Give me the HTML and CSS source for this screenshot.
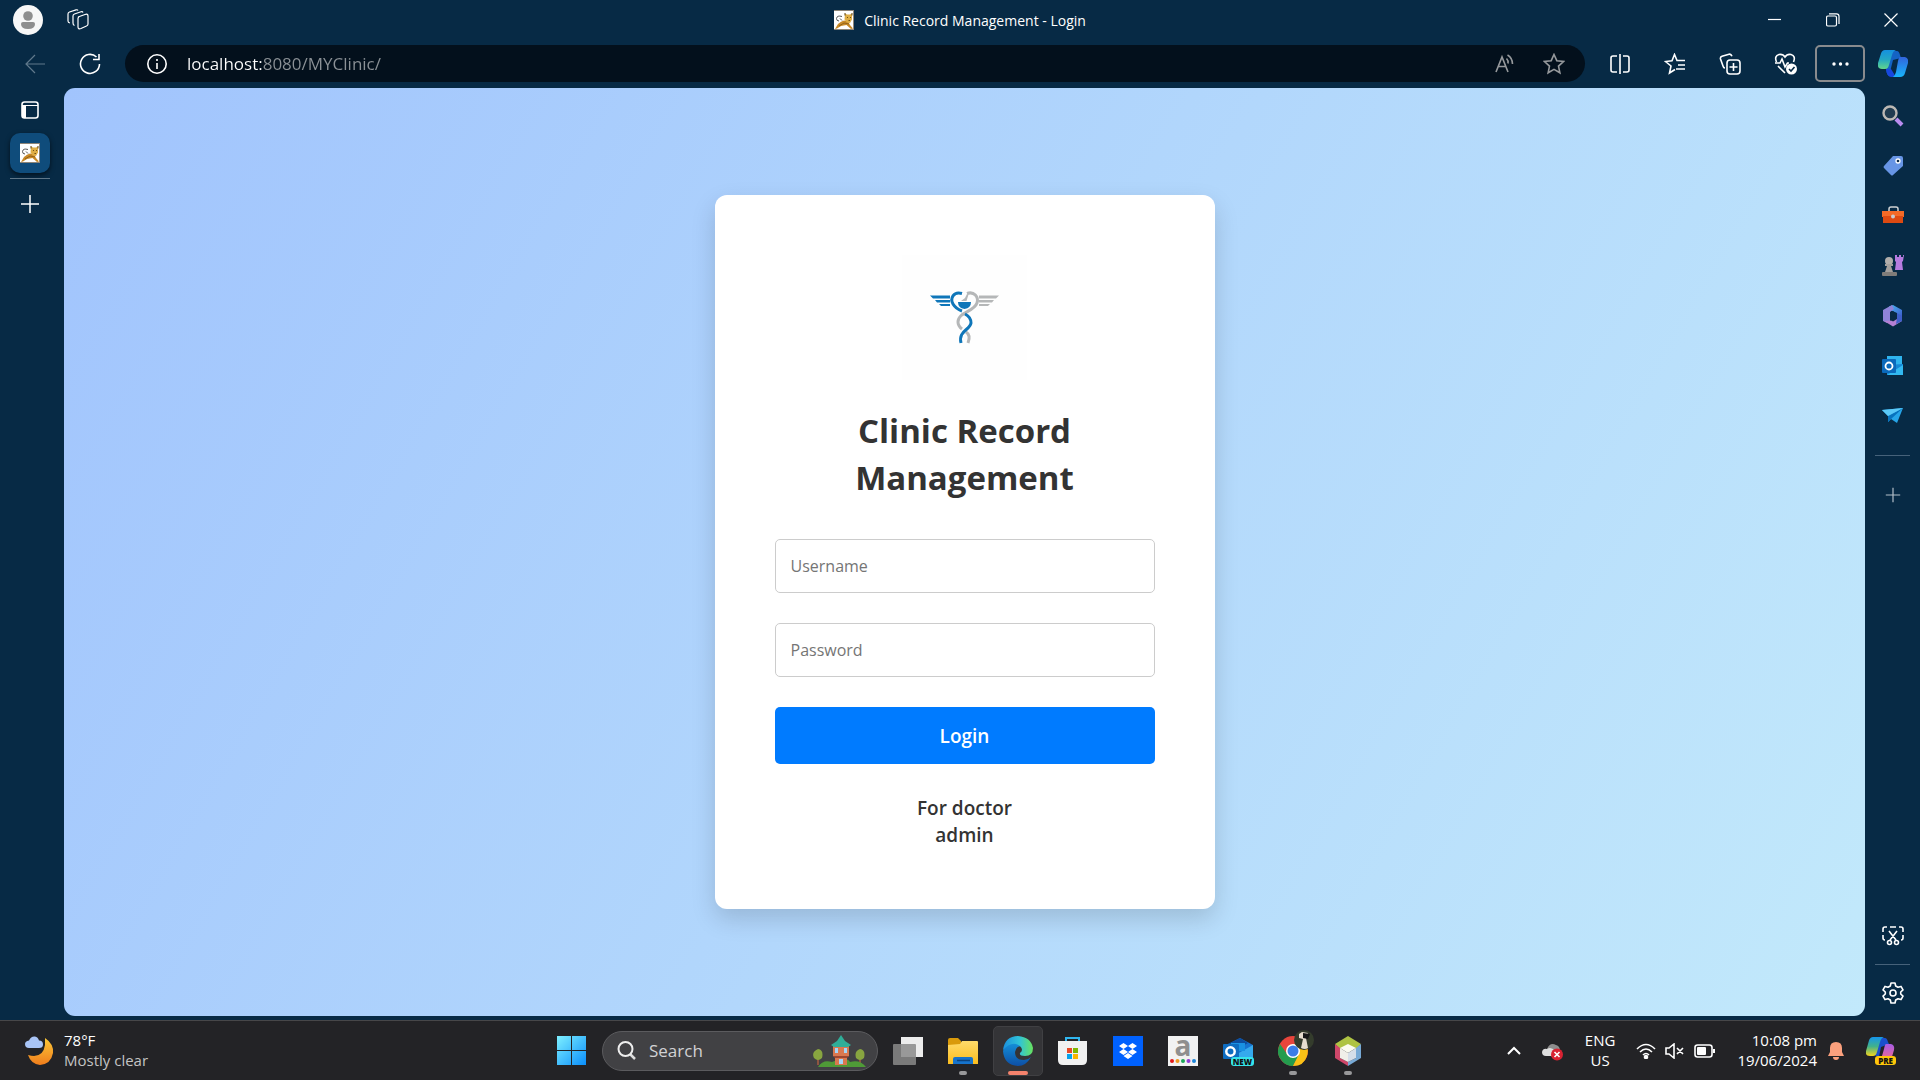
FILE: index.html
```html
<!DOCTYPE html>
<html lang="en">
<head>
  <meta charset="UTF-8">
  <title>Clinic Record Management - Login</title>
  <link rel="stylesheet" href="styles.css">
</head>
<body>
  <!-- shared shapes -->
  <svg class="defs" width="0" height="0">
    <symbol id="tomcat" viewBox="0 0 20 20">
      <rect width="20" height="20" fill="#fff"/>
      <path d="M0 .5H20M19.5 0V20M0 19.5H20" stroke="#8d8578" fill="none"/>
      <path d="M8 6.500Q3 5 2.500 8.500 2.500 11 5 11M6 8.500l2 2" stroke="#555" fill="none"/>
      <path d="M1 19l3-5q3-3 6-3.500l4 .5 2 4 3 3.500-2 .5-4.500-4-5.500 1-4 2.500z" fill="#c98a28"/>
      <path d="M11 3.500l2 1h3l2-1v6l-2 3.500-3-.5-2.500-3z" fill="#dfae45"/>
      <path d="M11 3v2.500M18 3v2.500" stroke="#5b4317" fill="none"/>
      <path d="M13 7.500h1M16 7.500h1M14.500 10.500h1.500" stroke="#6f5118" fill="none"/>
      <path d="M5 16l5-3 5 1" stroke="#7a5214" stroke-width=".7" fill="none"/>
    </symbol>
    <symbol id="plus" viewBox="0 0 20 20">
      <path d="M10 1V19M1 10H19" stroke="currentColor" stroke-width="1.5"/>
    </symbol>
    <linearGradient id="cp1" x1="0" y1="0" x2="0" y2="1"><stop offset="0" stop-color="#1590e0"/><stop offset=".5" stop-color="#23a7c4"/><stop offset="1" stop-color="#62d68a"/></linearGradient>
    <linearGradient id="cp2" x1="0" y1="0" x2="0" y2="1"><stop offset="0" stop-color="#3264db"/><stop offset="1" stop-color="#18b5fb"/></linearGradient>
    <linearGradient id="cp3" x1="0" y1="0" x2="0" y2="1"><stop offset="0" stop-color="#1595ec"/><stop offset=".5" stop-color="#42b28a"/><stop offset="1" stop-color="#f5d51c"/></linearGradient>
    <linearGradient id="cp4" x1="0" y1="0" x2="0" y2="1"><stop offset="0" stop-color="#a75ce6"/><stop offset="1" stop-color="#ff6c7d"/></linearGradient>
    <linearGradient id="win" x1="0" y1="0" x2="1" y2="1"><stop offset="0" stop-color="#7ef0ff"/><stop offset="1" stop-color="#0a8efb"/></linearGradient>
    <linearGradient id="moon" x1="0" y1="0" x2="0" y2="1"><stop offset="0" stop-color="#fbc838"/><stop offset="1" stop-color="#f07d1c"/></linearGradient>
    <linearGradient id="folder" x1="0" y1="0" x2="0" y2="1"><stop offset="0" stop-color="#ffdb6b"/><stop offset="1" stop-color="#fbbd1e"/></linearGradient>
    <linearGradient id="edge1" x1="0" y1="0" x2="1" y2="0"><stop offset="0" stop-color="#1b8fdc"/><stop offset=".55" stop-color="#30c3d9"/><stop offset="1" stop-color="#68e35d"/></linearGradient>
    <linearGradient id="edge2" x1="0" y1="0" x2="0" y2="1"><stop offset="0" stop-color="#1593dc"/><stop offset="1" stop-color="#0d4fa5"/></linearGradient>
    <linearGradient id="m365" x1="0" y1="0" x2="1" y2="1"><stop offset="0" stop-color="#49b7f2"/><stop offset="1" stop-color="#3b55c9"/></linearGradient>
  </svg>

  <header class="browser-top">
    <div class="titlebar">
      <div class="title-left">
        <button class="icon-btn" aria-label="Profile">
          <svg width="30" height="30"><circle cx="15" cy="15" r="15" fill="#f7f7f7"/><circle cx="15" cy="11" r="4.800" fill="#8e8e8e"/><path d="M8 19q0-2 2-2h10q2 0 2 2 0 5-7 5t-7-5z" fill="#8e8e8e"/></svg>
        </button>
        <button class="icon-btn" aria-label="Workspaces">
          <svg class="line" width="22" height="22"><path d="M11 8l7-2.500q3-1 3 1.500v8q0 1.500-1.500 2L14 19.500q-3 1-3-1.500V9.500q0-1 1-1.500z"/><path d="M7.500 16.500Q6 16 6 14V7q0-1.500 1.500-2L14 2.800q1.500-.5 2 .7"/><path d="M3 14q-2-.3-2-2V5q0-1.500 1.500-2L9 .9q1.500-.5 2 .6"/></svg>
        </button>
      </div>
      <div class="title-tab">
        <svg width="20" height="20"><use href="#tomcat"/></svg>
        <span>Clinic Record Management - Login</span>
      </div>
      <div class="window-buttons">
        <button class="icon-btn" aria-label="Minimize"><svg class="line" width="14" height="14"><path d="M0 6.500H13"/></svg></button>
        <button class="icon-btn" aria-label="Restore"><svg class="line" width="14" height="14"><rect x=".5" y="3" width="10" height="10" rx="1.500"/><path d="M3 .8h7.500q2.500 0 2.500 2.500V11"/></svg></button>
        <button class="icon-btn" aria-label="Close"><svg class="line" width="14" height="14"><path d="M.5 .5l13 13M13.500 .5l-13 13"/></svg></button>
      </div>
    </div>

    <div class="toolbar">
      <div class="nav-buttons">
        <button class="icon-btn dim" aria-label="Back"><svg class="line" width="20" height="20"><path d="M20 10H1M10 1L1 10l9 9"/></svg></button>
        <button class="icon-btn" aria-label="Refresh"><svg class="line bold" width="22" height="22"><path d="M20.500 11A9.500 9.500 0 1 1 17.500 4M20 1v5.500h-6"/></svg></button>
      </div>
      <div class="address">
        <svg class="line bold" width="20" height="20"><circle cx="10" cy="10" r="9.200"/><path d="M10 9v6M10 5v2"/></svg>
        <input class="address-input" type="text" aria-label="Address" value="localhost:8080/MYClinic/">
        <button class="icon-btn grey" aria-label="Read aloud"><svg class="line bold" width="20" height="20"><path d="M1 18L7 3l6 15M3 12.500h8M11.500 4.500q2 2 1.500 5M12.500 1q5 3 5 9"/></svg></button>
        <button class="icon-btn grey" aria-label="Add to favorites"><svg class="line bold" width="22" height="22"><path d="M11 1.500l2.800 6.200 6.700.8-5 4.600 1.400 6.700L11 16.400l-5.900 3.400 1.400-6.700-5-4.600 6.700-.8z"/></svg></button>
      </div>
      <div class="tools">
        <button class="icon-btn" aria-label="Split screen"><svg class="line bold" width="22" height="22"><path d="M8 3H4Q2 3 2 5V17q0 2 2 2h4M14 3h4q2 0 2 2V17q0 2-2 2h-4M11 1V21"/></svg></button>
        <button class="icon-btn" aria-label="Favorites"><svg class="line bold" width="22" height="22"><path d="M11 16.500L5.500 20 7 13 1.500 8.500l6.500-.8L10.500 1.500 13 7.500h8M14 12h7M12 16h9"/></svg></button>
        <button class="icon-btn" aria-label="Collections"><svg class="line bold" width="22" height="22"><rect x="8" y="7" width="13" height="14" rx="3"/><path d="M14.500 10v8M10.500 14h8M6 15q-1.500 0-2-2L1.500 6q-.5-2 1.500-2.700L10 1.200q2-.5 3 2"/></svg></button>
        <button class="icon-btn" aria-label="Browser essentials"><svg class="line bold" width="24" height="22"><path d="M2.500 9Q0 3 5 1.500 9 .8 11 4q2-3.200 6-2.500 5 1.500 2.500 7.500M4 13l7 7M1 10h5l2-4 3 8 2.500-4H15"/><circle cx="17.500" cy="16" r="5.500" fill="#fff" stroke="none"/><path d="M15 16l2 2 3.500-4" stroke="#072a45"/></svg></button>
        <button class="icon-btn more" aria-label="Settings and more"><svg width="18" height="6"><circle cx="3" cy="3" r="1.700" fill="#fff"/><circle cx="9.500" cy="3" r="1.700" fill="#fff"/><circle cx="16" cy="3" r="1.700" fill="#fff"/></svg></button>
        <button class="icon-btn copilot" aria-label="Copilot"><svg width="30" height="28"><path d="M8 17l4-13q1-3 4-3h3q2 0 3 4l1 3-8 2-4 16q-3-2-3-9z" fill="#1463c4"/><path d="M7 0h11q-3 1-4 5l-3 10q-1 4-4 4H4q-5 0-4-6L3 3.500Q4 0 7 0z" fill="url(#cp1)"/><path d="M8 19h5l5 8h-5q-4 0-5-8z" fill="#1747df"/><path d="M22 7h5q4 1 3 6l-3 10q-1 4-5 4h-7q2-1 3-5l2-11q1-4 2-4z" fill="url(#cp2)"/></svg></button>
      </div>
    </div>
  </header>

  <main class="browser-body">
    <nav class="tab-strip">
      <button class="icon-btn" aria-label="Tab actions"><svg width="18" height="18"><rect x="1" y="1" width="16" height="16" rx="2.500" fill="none" stroke="#fff" stroke-width="1.600"/><path d="M1 4.500H17" stroke="#fff"/><path d="M1 4.500h4V17H2q-1 0-1-1z" fill="#fff"/></svg></button>
      <button class="icon-btn active-tab" aria-label="Clinic Record Management - Login"><svg width="20" height="20"><use href="#tomcat"/></svg></button>
      <hr class="tab-line">
      <button class="icon-btn new-tab" aria-label="New tab"><svg width="20" height="20"><use href="#plus"/></svg></button>
    </nav>

    <section class="page">
      <form class="login-container">
        <svg class="logo" viewBox="0 0 125 125" role="img" aria-label="Clinic logo">
          <rect width="125" height="125" fill="#fefefe"/>
          <g fill="#0f76b9">
            <path d="M28 40.500h20v3H31zM33 45h15v2.500H35zM37 49h11v2H39z"/>
            <path d="M56 47h13q0 6-6.500 7-6.500-1-6.500-7z"/>
          </g>
          <g fill="#b5b7b8">
            <path d="M97 40.500H77v3h17zM92 45H77v2.500h13zM88 49H77v2h9z"/>
            <path d="M59 46l4-3 2-4 1.500.5-2 6.500z"/>
          </g>
          <g fill="none" stroke-width="3">
            <path d="M65 38.500C72 36 77 42 75 48 C72 57 56 57 56 67Q56 71 60 74M64 77Q69 80 66 88" stroke="#b5b7b8"/>
            <path d="M60 38.500C51 36 48 44 51 49Q54 54 60 56M63 59Q69 62 69 68C68 75 56 76 59 88" stroke="#0f76b9"/>
          </g>
        </svg>
        <h1>Clinic Record Management</h1>
        <input class="field" type="text" placeholder="Username" aria-label="Username">
        <input class="field" type="password" placeholder="Password" aria-label="Password">
        <button class="login-btn" type="button">Login</button>
        <p class="hint">For doctor<br>admin</p>
      </form>
    </section>

    <aside class="sidebar">
      <button class="icon-btn" aria-label="Search"><svg width="22" height="22"><path d="M14 14l6 6" stroke="#b98cf0" stroke-width="4"/><circle cx="8" cy="8" r="6.500" fill="#203b50" stroke="#bcb8b4" stroke-width="2.400"/></svg></button>
      <button class="icon-btn" aria-label="Shopping"><svg width="22" height="22"><path d="M11 1h8q2 0 2 2v8L11 20q-1 1-2 0l-7-7q-1-1 0-2z" fill="#6795e5"/><circle cx="16" cy="6" r="2" fill="#0b2a48" stroke="#fff" stroke-width="1.300"/></svg></button>
      <button class="icon-btn" aria-label="Tools"><svg width="22" height="22"><path d="M7 6V4q0-2 2-2h5q2 0 2 2v2" fill="none" stroke="#cfd1d2" stroke-width="1.500"/><path d="M0 6h22v6H0z" fill="#f36a27"/><path d="M1 11h20v7H1z" fill="#dd4a12"/><circle cx="11" cy="11.500" r="2" fill="#c8ccd0"/></svg></button>
      <button class="icon-btn" aria-label="Games"><svg width="22" height="24"><path d="M13 1h2v2h2V1h2v2h2V1h1l-1 6-1 1 1 8h-8l1-8-1-1z" fill="#b67be0"/><circle cx="7" cy="7" r="4" fill="#b1aeab"/><path d="M3 10h8v2H9l2 6H3l2-6H3z" fill="#a29f9c"/><rect y="18" width="15" height="4" rx="1" fill="#7f7c79"/></svg></button>
      <button class="icon-btn" aria-label="Microsoft 365"><svg width="22" height="24"><path d="M7 2.500L11 1l9 5v9l-5-3V9L8 6z" fill="url(#m365)"/><path d="M10 1L1 6v11l4 2 3-2V8l4-3z" fill="#8f83d8"/><path d="M2 17l9 5.500 9-5.500v-3l-5-1-5 3.500z" fill="#b580d4"/><path d="M15 9l5 3v5l-6 3 1-6z" fill="#405fc9"/><path d="M8 8.500l3-1.500 4 3v5l-4 2.500-3-2z" fill="#072a45"/></svg></button>
      <button class="icon-btn" aria-label="Outlook"><svg width="22" height="22"><path d="M5 1h15v12H5z" fill="#2fb4ee"/><path d="M5 10l16-1v11H5z" fill="#1688d5"/><path d="M5 20l16-10v10z" fill="#32b9f1"/><rect y="4" width="14" height="14" rx="1" fill="#0b69bb"/><circle cx="7" cy="11" r="3.500" fill="none" stroke="#fff" stroke-width="1.800"/></svg></button>
      <button class="icon-btn" aria-label="Drop"><svg width="22" height="20"><path d="M0 4L21 2 15 17 9 13 6 16V10z" fill="#26a5e8"/><path d="M6 10L21 2 9 13l-3 3z" fill="#0872bd"/><path d="M0 4l21-2L6 10z" fill="#5bc9f7"/></svg></button>
      <hr class="side-line">
      <button class="icon-btn add" aria-label="Customize"><svg width="16" height="16"><use href="#plus"/></svg></button>
      <div class="side-bottom">
        <button class="icon-btn" aria-label="Screenshot"><svg class="line bold" width="22" height="20"><path d="M1 6V3q0-2 2-2h2M8 1h6M17 1h2q2 0 2 2v3M1 9v3q0 2 2 2M21 9v3q0 2-2 2M7 5l7 9M15 5l-7 9"/><circle cx="7.500" cy="16.500" r="2"/><circle cx="14.500" cy="16.500" r="2"/></svg></button>
        <hr class="side-line">
        <button class="icon-btn" aria-label="Settings"><svg class="line bold" width="22" height="22"><path d="M9 1h4l.7 3 2.300 1.300 3-.9 2 3.500L18.700 10v2l2.300 2.100-2 3.500-3-.9-2.300 1.300L13 21H9l-.7-3L6 16.700l-3 .9-2-3.500L3.300 12v-2L1 7.900l2-3.500 3 .9L8.300 4z" stroke-linejoin="round"/><circle cx="11" cy="11" r="3"/></svg></button>
      </div>
    </aside>
  </main>

  <footer class="taskbar">
    <button class="weather">
      <svg width="30" height="30"><path d="M20 2q9 6 8 15-2 11-13 12Q6 28 3 19q15 4 17-10z" fill="url(#moon)"/><path d="M4 12q-4 0-4-4 0-3 4-3.500Q6 0 10 .5q3 .5 4 4 4 0 4 4 0 3.500-4 3.500z" fill="#a8c4f6"/></svg>
      <span class="two-lines"><span>78°F</span><span class="muted">Mostly clear</span></span>
    </button>

    <div class="apps">
      <button class="app" aria-label="Start"><svg width="30" height="30"><path d="M0 0h14v14H0zM15 0h14v14H15zM0 15h14v14H0zM15 15h14v14H15z" fill="url(#win)"/></svg></button>
      <label class="search">
        <svg width="20" height="20"><path d="M13 13l5 5" stroke="#ddd" stroke-width="2.500"/><circle cx="8.500" cy="8" r="7" fill="none" stroke="#eee" stroke-width="2"/></svg>
        <input class="search-input" type="text" placeholder="Search" aria-label="Search">
        <svg width="54" height="34"><path d="M5 24v7M47 24v7" stroke="#a85d40" stroke-width="1.500"/><path d="M5 15q6 1 4 9-4 4-8 0-3-6 4-9zM47 15q6 1 4 9-4 4-8 0-2-7 4-9z" fill="#88a540"/><path d="M5 33q5-8 14-5 15-6 18 0 10-3 16 5z" fill="#4f9a37"/><path d="M20 11h16v11l-2 1v8H22v-8l-2-1z" fill="#d9784f"/><path d="M20 22h16l-2 2H22z" fill="#9d4630"/><path d="M28 1l4 6 6 4-3 2H21l-3-2 6-4z" fill="#2fae98"/><path d="M22 14h3v5h-3zM31 14h3v5h-3zM26 25h4v5h-4z" fill="#a5d5f7"/></svg>
      </label>
      <button class="app" aria-label="Task view"><svg width="30" height="30"><rect x="8" y="1" width="22" height="20" fill="#ededed"/><rect y="8" width="23" height="21" rx="1" fill="#8a8a8a" opacity=".85"/></svg></button>
      <button class="app running" aria-label="File Explorer"><svg width="30" height="30"><path d="M0 4q0-2 2-2h8l3 3v7H0z" fill="#d99a0b"/><path d="M0 9l12-1 2-3h15q1 0 1 1v22H0z" fill="url(#folder)"/><path d="M5 28v-5q0-2 2-2h16q2 0 2 2v5z" fill="#1673cb"/><path d="M9 24.500h13" stroke="#0b427c" stroke-width="1.500"/></svg></button>
      <button class="app running current" aria-label="Microsoft Edge"><svg width="30" height="30"><path d="M0 15Q3 4 15 6q7 2 7 6-8-5-10 4 0 8 9 8 4 0 7-3-5 9-13 9Q1 29 0 15z" fill="url(#edge2)"/><path d="M0 14Q2 0 15 0q13 1 15 12 0 8-8 8-6 0-5-3 4-3 0-7Q9 4 0 14z" fill="url(#edge1)"/></svg></button>
      <button class="app" aria-label="Microsoft Store"><svg width="30" height="30"><path d="M8 7V2h13v5" fill="none" stroke="#30b6ef" stroke-width="2"/><path d="M0 5h29v19q0 5-5 5H5q-5 0-5-5z" fill="#f1f1f1"/><path d="M9 12h5v5H9z" fill="#e84a27"/><path d="M15 12h5v5h-5z" fill="#7db802"/><path d="M9 18h5v5H9z" fill="#05a3ed"/><path d="M15 18h5v5h-5z" fill="#fbb401"/></svg></button>
      <button class="app" aria-label="Dropbox"><svg width="30" height="30"><rect width="30" height="30" fill="#0061fe"/><path d="M10.500 7l4.500 3-4.500 3L6 10zM19.500 7l4.500 3-4.500 3-4.500-3zM10.500 13l4.500 3-4.500 3L6 16zM19.500 13l4.500 3-4.500 3-4.500-3zM15 17l4.500 3-4.500 3-4.500-3z" fill="#fff"/></svg></button>
      <button class="app" aria-label="Alexa"><span class="amz"><b>a</b><svg width="28" height="6"><circle cx="3" cy="3" r="2" fill="#e21b1b"/><circle cx="8.500" cy="3" r="2" fill="#f09a20"/><circle cx="14" cy="3" r="2" fill="#1da75a"/><circle cx="19.500" cy="3" r="2" fill="#8f3bd8"/><circle cx="25" cy="3" r="2" fill="#1d86d8"/></svg></span></button>
      <button class="app" aria-label="Outlook"><svg width="30" height="30"><path d="M5 8L17 2l13 7v14H5z" fill="#1673cf"/><path d="M5 8l12-6 8 5-14 8z" fill="#0c4d9f"/><path d="M14 18l16-9v14H14z" fill="#35a9ed"/><path d="M8 7h14v8H8z" fill="#1991e2"/><rect y="8" width="16" height="15" rx="1" fill="#0e6cc0"/><circle cx="7.500" cy="15.500" r="4.200" fill="none" stroke="#fff" stroke-width="2.500"/></svg><span class="tag tag-new">NEW</span></button>
      <button class="app running" aria-label="Chrome"><svg width="30" height="30"><circle cx="15" cy="15" r="15" fill="#e8453c"/><path d="M2 8Q-3 18 4 25q4 5 11 5l6-11-6 2-6-3z" fill="#249c4e"/><path d="M15 30q11 0 14-10 2-6-1-12H15l6 10z" fill="#fbc116"/><circle cx="15" cy="15" r="7" fill="#fff"/><circle cx="15" cy="15" r="5.500" fill="#3b7ce8"/></svg>
        <svg class="chrome-user" width="20" height="20"><circle cx="10" cy="10" r="10" fill="#343c2c"/><path d="M5 4l3-2 6 1-2 5 2 10q-3 2-7 0l2-9-4-1z" fill="#e6ddcd"/><path d="M9 3l7 1-2 5-5-1z" fill="#171918"/></svg></button>
      <button class="app running" aria-label="NetBeans"><svg width="28" height="30"><path d="M14 0l13 8-5 5-8-4-8 4-5-5z" fill="#aec343"/><path d="M1 8l5 4v10l8 4v4L1 22z" fill="#cf476a"/><path d="M27 8l-5 4v10l-8 4v4l13-8z" fill="#77a9d5"/><path d="M14 8l8 4-8 5-8-5z" fill="#fbfbf1"/><path d="M6 12l8 5v9l-8-4z" fill="#f0efe9"/><path d="M22 12l-8 5v9l8-4z" fill="#d5dee9"/></svg></button>
    </div>

    <div class="tray">
      <button class="tray-btn" aria-label="Hidden icons"><svg class="line" width="14" height="10"><path d="M1 8l6-6 6 6" stroke-width="2"/></svg></button>
      <button class="tray-btn" aria-label="OneDrive"><svg width="22" height="20"><path d="M5 8Q8 1 14 4q4 1 4 6l-8 6z" fill="#8d8d8d"/><path d="M4 15q-4 0-4-4 1-4 5-3 4-3 8 2v5z" fill="#dedede"/><circle cx="15" cy="13.500" r="6" fill="#d92232"/><path d="M12.500 11l5 5M17.500 11l-5 5" stroke="#fff" stroke-width="1.600"/></svg></button>
      <button class="tray-btn lang"><span>ENG</span><span>US</span></button>
      <button class="tray-btn quick" aria-label="Network, volume and battery">
        <svg class="line bold" width="20" height="16"><path d="M1 6q9-9 18 0M4 9q6-6 12 0M7 12q3-3 6 0"/><circle cx="10" cy="14" r="1.500" fill="#fff"/></svg>
        <svg class="line bold" width="20" height="16"><path d="M1 5h3l5-4v14l-5-4H1zM12 5l6 6M18 5l-6 6"/></svg>
        <svg class="line bold" width="22" height="16"><rect x="1" y="2" width="17" height="12" rx="2.500"/><rect x="3" y="4" width="9" height="8" rx="1" fill="#fff" stroke="none"/><path d="M20 6v4" stroke-width="2"/></svg>
      </button>
      <button class="tray-btn clock"><span>10:08 pm</span><span>19/06/2024</span></button>
      <button class="tray-btn" aria-label="Notifications"><svg width="18" height="20"><path d="M1 15l2-4V7q0-6 6-6t6 6v4l2 4zM6 16h6q0 3-3 3t-3-3z" fill="#fba07d"/></svg></button>
      <button class="tray-btn copilot-pre" aria-label="Copilot preview"><svg width="30" height="28"><path d="M8 18l4-14q1-3 4-3h3q2 0 3 4l1 2-8 3-2 10z" fill="#1a50cc"/><path d="M7 0h11q-3 1-4 5l-3 10q-1 4-4 4H4q-5 0-4-5L3 3.500Q4 0 7 0z" fill="url(#cp3)"/><path d="M20 7h5q4 1 3 6l-3 10q-1 3-5 3h-6l4-14q1-5 2-5z" fill="url(#cp4)"/></svg><span class="tag tag-pre">PRE</span></button>
    </div>
  </footer>
</body>
</html>
```

FILE: styles.css
```css
*{
  box-sizing: border-box;
  padding: 0;
  margin: 0;
}
body{
  display: flex;
  flex-direction: column;
  height: 100vh;
  overflow: hidden;
  background: #072a45;
  color: #fff;
  font-family: "Open Sans", "Noto Sans", sans-serif;
  font-size: 14px;
}
button, input{
  border: none;
  background: none;
  color: inherit;
  font: inherit;
  outline: none;
}
svg{
  display: block;
  flex: none;
}
.defs{
  position: absolute;
}
.line{
  fill: none;
  stroke: currentColor;
  stroke-width: 1.2;
}
.bold{
  stroke-width: 1.6;
}
.icon-btn{
  display: flex;
  align-items: center;
  justify-content: center;
  flex: none;
}

/* title bar */
.titlebar{
  display: grid;
  grid-template-columns: 1fr auto 1fr;
  align-items: center;
  height: 40px;
}
.title-left{
  display: flex;
  gap: 24px;
  padding-left: 13px;
}
.title-tab{
  display: flex;
  align-items: center;
  gap: 10px;
}
.window-buttons{
  display: flex;
  justify-content: flex-end;
  gap: 44px;
  padding-right: 22px;
}

/* toolbar */
.toolbar{
  display: flex;
  align-items: center;
  height: 48px;
  padding: 0 12px 1px 0;
}
.nav-buttons{
  display: flex;
  align-items: center;
  gap: 34px;
  width: 125px;
  padding-left: 25px;
}
.dim{
  color: #60798c;
}
.grey{
  color: #96999c;
}
.address{
  display: flex;
  flex: 1;
  align-items: center;
  gap: 20px;
  height: 37px;
  padding: 0 20px 0 22px;
  border-radius: 19px;
  background: #03101c;
}
.address-input{
  flex: 1;
  min-width: 0;
  font-size: 17px;
  background: linear-gradient(90deg, #fff 75px, #8b9196 75px);
  -webkit-background-clip: text;
  background-clip: text;
  color: transparent;
}
.address .grey + .grey{
  margin-left: 8px;
}
.tools{
  display: flex;
  align-items: center;
  gap: 33px;
  padding-left: 24px;
}
.more{
  width: 50px;
  height: 37px;
  margin: 0 -20px 0 -16px;
  border: 2px solid #898b8e;
  border-radius: 5px;
}

/* middle */
.browser-body{
  display: flex;
  flex: 1;
  min-height: 0;
  padding-bottom: 4px;
}
.tab-strip{
  display: flex;
  flex-direction: column;
  align-items: center;
  width: 64px;
  padding: 13px 10px 0 6px;
}
.active-tab{
  width: 40px;
  height: 40px;
  margin-top: 14px;
  border-radius: 10px;
  background: #0f4c7b;
  box-shadow: 0 2px 5px rgba(0, 0, 0, .6);
}
.tab-line{
  width: 40px;
  margin: 5px 0 15px;
  border: none;
  border-top: 1px solid #5f7688;
}
.page{
  display: flex;
  flex: 1;
  align-items: center;
  justify-content: center;
  border-radius: 11px;
  background: linear-gradient(120deg, #a1c4fd 0%, #c2e9fb 100%);
}
.login-container{
  display: flex;
  flex-direction: column;
  align-items: center;
  width: 500px;
  padding: 60px;
  border-radius: 12px;
  background: #fff;
  box-shadow: 0 10px 25px rgba(0, 0, 0, .15);
  color: #333;
}
.logo{
  width: 125px;
}
h1{
  margin: 27px 0 38px;
  font-size: 33px;
  line-height: 47px;
  text-align: center;
}
.field{
  width: 100%;
  height: 54px;
  margin-bottom: 30px;
  padding: 0 15px;
  border: 1px solid #ccc;
  border-radius: 5px;
  font-size: 16px;
}
.field::placeholder{
  color: #757575;
}
.login-btn{
  width: 100%;
  height: 57px;
  border-radius: 5px;
  background: #007bff;
  color: #fff;
  font-size: 19px;
  font-weight: 600;
}
.hint{
  margin-top: 31px;
  font-size: 19px;
  font-weight: 600;
  line-height: 27px;
  text-align: center;
}

/* right sidebar */
.sidebar{
  display: flex;
  flex-direction: column;
  align-items: center;
  gap: 28px;
  width: 55px;
  padding-top: 17px;
}
.sidebar .icon-btn{
  height: 22px;
}
.side-line{
  width: 35px;
  border: none;
  border-top: 1px solid #46627a;
}
.sidebar .add{
  color: #b4bfc9;
}
.side-bottom{
  display: flex;
  flex-direction: column;
  align-items: center;
  gap: 17px;
  margin: auto 0 12px;
}

/* taskbar */
.taskbar{
  display: grid;
  grid-template-columns: 1fr auto 1fr;
  align-items: center;
  height: 60px;
  border-top: 1px solid #474749;
  background: #232326;
  font-size: 15px;
}
.weather{
  display: flex;
  align-items: center;
  gap: 9px;
  padding-left: 25px;
}
.two-lines{
  display: flex;
  flex-direction: column;
  padding-bottom: 2px;
  line-height: 20px;
  text-align: left;
}
.muted{
  color: #c4c4c4;
}
.apps{
  display: flex;
  align-items: center;
  gap: 5px;
}
.app{
  position: relative;
  display: flex;
  align-items: center;
  justify-content: center;
  width: 50px;
  height: 50px;
  border-radius: 5px;
}
.running::after{
  content: "";
  position: absolute;
  bottom: 1px;
  left: 50%;
  width: 8px;
  height: 4px;
  border-radius: 2px;
  background: #98989a;
  transform: translateX(-50%);
}
.current{
  background: #343437;
  border: 1px solid #404043;
}
.current::after{
  bottom: 0;
  width: 20px;
  background: #f4826c;
}
.search{
  display: flex;
  align-items: center;
  gap: 12px;
  width: 276px;
  height: 40px;
  padding: 0 10px 0 14px;
  border: 1px solid #5b5b5e;
  border-radius: 20px;
  background: #414144;
}
.search-input{
  flex: 1;
  min-width: 0;
  font-size: 17px;
}
.search-input::placeholder{
  color: #d2d2d4;
}
.amz{
  display: flex;
  flex-direction: column;
  align-items: center;
  justify-content: space-between;
  width: 30px;
  height: 30px;
  padding-bottom: 2px;
  background: #f2f2f2;
  color: #8f8f8f;
  font-size: 28px;
  line-height: 18px;
}
.tag{
  position: absolute;
  border-radius: 3px;
  color: #111;
  font-size: 8px;
  font-weight: 800;
  line-height: 9px;
}
.tag-new{
  right: 9px;
  bottom: 10px;
  padding: 0 2px;
  background: #35e4ea;
}
.tag-pre{
  right: 0;
  bottom: 0;
  padding: 0 3px;
  background: #ffc60a;
}
.chrome-user{
  position: absolute;
  top: 4px;
  right: 4px;
}
.tray{
  display: flex;
  align-items: center;
  justify-content: flex-end;
  padding-right: 24px;
}
.tray-btn{
  position: relative;
  display: flex;
  align-items: center;
  margin-left: 21px;
}
.lang, .clock{
  flex-direction: column;
  padding-bottom: 2px;
  line-height: 20px;
}
.clock{
  align-items: flex-end;
}
.quick{
  gap: 9px;
}
.clock + .tray-btn{
  margin-left: 10px;
}
```
